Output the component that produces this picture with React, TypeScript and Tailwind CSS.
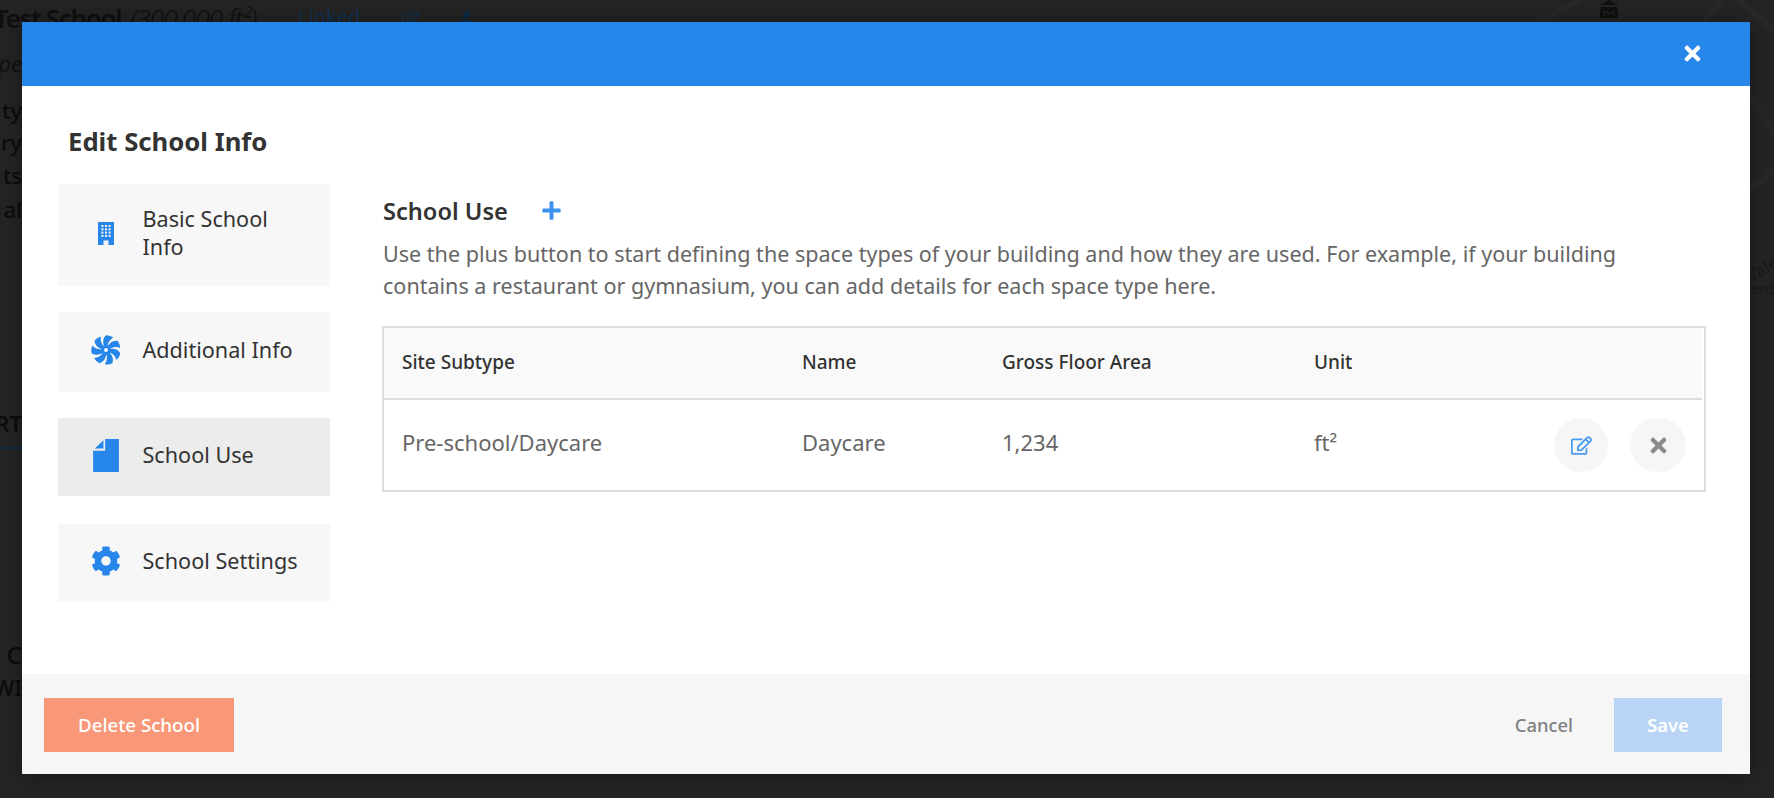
import type { ReactNode } from "react";
import { FaCog, FaPlus, FaRegEdit, FaTimes, FaUser } from "react-icons/fa";

function BuildingIcon() {
  const dots = [];
  for (let r = 0; r < 4; r++) {
    for (let c = 0; c < 3; c++) {
      dots.push(<rect key={`${r}-${c}`} x={3.4 + c * 3.6} y={3 + r * 3.3} width="2" height="2" fill="#f7f7f7" />);
    }
  }
  return (
    <svg width="16" height="23" viewBox="0 0 16 23">
      <path d="M0 0H16V23H10.5V18.5H5.5V23H0Z" fill="#2786ea" />
      {dots}
    </svg>
  );
}

function FanIcon() {
  const blades = [0, 51.4, 102.8, 154.2, 205.7, 257.1, 308.5];
  return (
    <svg width="30" height="30" viewBox="0 0 30 30">
      <circle cx="15" cy="15" r="5" fill="#2786ea" />
      {blades.map((a) => (
        <path
          key={a}
          d="M14 13C11.5 9 11.5 3.5 15 0.3C18.2 0.3 20.5 1.2 22.3 2.8C18.5 4.5 16.5 8.5 16.3 13Z"
          fill="#2786ea"
          transform={`rotate(${a} 15 15)`}
        />
      ))}
      <circle cx="15" cy="15" r="2" fill="#f7f7f7" />
    </svg>
  );
}

function FileIcon() {
  return (
    <svg width="26" height="33" viewBox="0 0 25 32">
      <path d="M11.7 0H25V32H0V11.3H11.7Z" fill="#2786ea" />
      <path d="M1.7 9.3L10 1.3V9.3Z" fill="#2786ea" />
    </svg>
  );
}

function MapLayer() {
  return (
    <svg className="absolute left-0 top-0 h-full w-full" viewBox="0 0 1774 798" fill="none">
      <path d="M1530 26L1580 0M1700 26L1722 0M1738 0L1774 30M1750 95L1774 135M1750 190L1774 170" stroke="#282828" strokeWidth="6" />
      <path d="M1609 0L1600 5H1618ZM1601 7H1617V9H1601ZM1600 9H1618V18H1600Z" fill="#12100f" />
      <path d="M1604 16V11L1609 14L1614 11V16" stroke="#2a2725" strokeWidth="1" />
      <text x="1751" y="283" fontSize="17" fill="#191919" transform="rotate(-32 1751 283)">Valen</text>
      <text x="1751" y="294" fontSize="15" fill="#191919">enS</text>
    </svg>
  );
}

function SideItem({ icon, label, active, h }: { icon: ReactNode; label: string; active?: boolean; h: string }) {
  return (
    <div className={`flex items-center pb-[4px] pl-[28px] ${h} ${active ? "bg-[#ececec]" : "bg-[#f7f7f7]"}`}>
      <div className="mr-[16.5px] flex w-[40px] shrink-0 justify-center">{icon}</div>
      <span className="max-w-[165px] text-[21.6px] leading-[28px] text-[#333]">{label}</span>
    </div>
  );
}

export default function App() {
  return (
    <div
      className="relative h-[798px] w-full overflow-hidden bg-[#242424]"
      style={{ fontFamily: '"Noto Sans", sans-serif' }}
    >
      <MapLayer />

      {/* page behind the dialog */}
      <div className="relative flex h-[42px] items-center whitespace-nowrap text-[#0f0f0f]">
        <span className="-ml-[6px] w-[126px] -translate-y-[3px] text-[26px] font-semibold leading-[42px] tracking-[-0.05em]">Test School</span>
        <span className="ml-[10px] w-[140px] -translate-y-[3px] text-[26px] font-light italic leading-[42px] tracking-[-0.03em]">(300,000 ft²)</span>
        <span className="ml-[28px] w-[56px] -translate-y-[4px] text-[20px] leading-[42px] text-[#123352]">Linked</span>
        <FaRegEdit className="ml-[48px] -translate-y-[2px] text-[#14304a]" size={18} />
        <FaUser className="ml-[39px] -translate-y-[3px] text-[#0f2a45]" size={15} />
      </div>
      <div className="relative flex w-[22px] flex-col items-end overflow-hidden text-[22px] font-medium leading-[32px] text-[#0c0c0c]">
        <span className="mt-[5px] whitespace-nowrap font-normal italic text-[#111]">pe</span>
        <span className="mt-[15px] whitespace-nowrap">ty</span>
        <span className="whitespace-nowrap">ry</span>
        <span className="mt-[1px] whitespace-nowrap">ts</span>
        <span className="mt-[2px] whitespace-nowrap">al</span>
        <span className="mt-[182px] whitespace-nowrap font-semibold">RT</span>
        <div className="mt-[8px] h-[2px] w-full bg-[#0f2a45]" />
        <span className="mt-[190px] whitespace-nowrap text-[24px]">C</span>
        <span className="whitespace-nowrap">WI</span>
      </div>

      {/* dialog */}
      <div className="absolute left-[22px] top-[22px] flex h-[752px] w-[1728px] flex-col bg-white shadow-[0_0_20px_rgba(0,0,0,0.35)]">
        <div className="flex h-[64px] shrink-0 items-center justify-end bg-[#2786ea] pb-[2px] pr-[46px]">
          <FaTimes className="text-white" size={23} />
        </div>

        <div className="flex-1 pl-[36px] pr-[44px]">
          <h1 className="mb-[26px] ml-[10px] mt-[40px] h-[32px] text-[25.7px] font-bold leading-[32px] text-[#333]">
            Edit School Info
          </h1>
          <div className="flex gap-[52px]">
            <div className="flex w-[272px] shrink-0 flex-col gap-[26px]">
              <SideItem h="h-[102px]" icon={<BuildingIcon />} label="Basic School Info" />
              <SideItem h="h-[80px]" icon={<FanIcon />} label="Additional Info" />
              <SideItem h="h-[78px]" icon={<FileIcon />} label="School Use" active />
              <div className="mt-[2px]">
                <SideItem h="h-[78px]" icon={<FaCog className="text-[#2786ea]" size={30} />} label="School Settings" />
              </div>
            </div>

            <div className="min-w-0 flex-1 pt-[13px]">
              <div className="flex h-[28px] items-center pl-[1px]">
                <h2 className="text-[23.6px] font-semibold leading-[28px] text-[#333]">School Use</h2>
                <FaPlus className="ml-[33px] -translate-y-[1px] text-[#3a92ee]" size={21} />
              </div>
              <p className="mb-[24px] mt-[13px] max-w-[1260px] pl-[1px] text-[21.55px] leading-[32px] text-[#666]">
                Use the plus button to start defining the space types of your building and how they are used. For example, if your building contains a restaurant or gymnasium, you can add details for each space type here.
              </p>

              <div className="border-2 border-[#dcdcdc] pr-[2px]">
                <div className="grid h-[72px] grid-cols-[400px_200px_312px_1fr] items-center border-b-2 border-[#dcdcdc] bg-[#f9f9f9] pb-[1px] pl-[18px] text-[19px] font-medium text-[#333]">
                  <span>Site Subtype</span>
                  <span>Name</span>
                  <span>Gross Floor Area</span>
                  <span>Unit</span>
                </div>
                <div className="grid h-[90px] grid-cols-[400px_200px_312px_1fr] items-center pl-[18px] text-[22px] text-[#666]">
                  <span className="-translate-y-[3px]">Pre-school/Daycare</span>
                  <span className="-translate-y-[3px]">Daycare</span>
                  <span className="-translate-y-[3px]">1,234</span>
                  <div className="flex items-center justify-between pr-[16px]">
                    <span className="-translate-y-[3px]">ft²</span>
                    <div className="flex items-center gap-[22px]">
                      <button className="flex h-[54px] w-[54px] items-center justify-center rounded-full bg-[#f6f6f6]">
                        <FaRegEdit className="text-[#4a9bf0]" size={21} />
                      </button>
                      <button className="flex h-[54px] w-[56px] items-center justify-center rounded-full bg-[#f6f6f6]">
                        <FaTimes className="text-[#8a8a8a]" size={23} />
                      </button>
                    </div>
                  </div>
                </div>
              </div>
            </div>
          </div>
        </div>

        <div className="flex h-[100px] shrink-0 items-start justify-between bg-[#f6f6f6] pl-[22px] pr-[28px] pt-[24px]">
          <button className="h-[54px] w-[190px] bg-[#f99879] text-[18.7px] font-medium text-white">Delete School</button>
          <div className="flex items-center">
            <button className="mr-[41px] text-[18.4px] font-medium text-[#808080]">Cancel</button>
            <button className="h-[54px] w-[108px] bg-[#b9d4f4] text-[18.4px] font-semibold text-white">Save</button>
          </div>
        </div>
      </div>
    </div>
  );
}
